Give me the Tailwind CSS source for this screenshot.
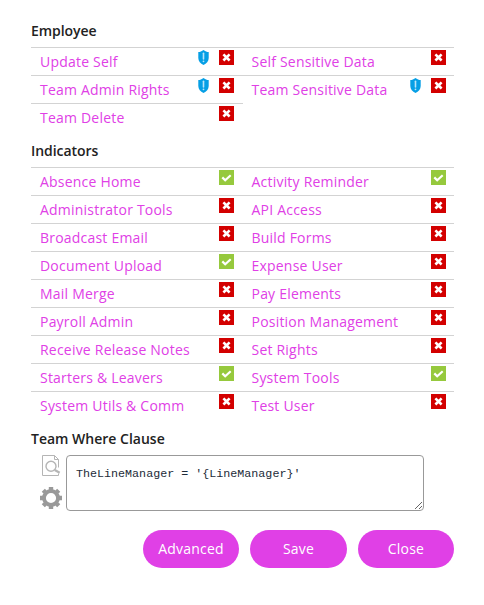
<!DOCTYPE html>
<html lang="en">
<head>
<meta charset="utf-8">
<title>Rights</title>
<script src="https://cdn.jsdelivr.net/npm/@tailwindcss/browser@4"></script>
</head>
<body class="bg-white font-['Open_Sans',sans-serif] text-[14px] text-[#222]">
<svg class="hidden">
  <symbol id="no" viewBox="0 0 15 15"><path fill="#d30000" d="M0 0h15v15H0z"/><path d="M4.400 4.300l6.200 6.200M10.600 4.300L4.400 10.500" stroke="#fff" stroke-width="2.600"/></symbol>
  <symbol id="yes" viewBox="0 0 15 15"><path fill="#96c93d" d="M0 0h15v15H0z"/><path d="M3.300 7.400l2.900 2.900 5.500-5" fill="none" stroke="#fff" stroke-width="2.200"/></symbol>
  <symbol id="shield" viewBox="0 0 11 15"><path fill="#069fe5" d="M5.500 0C7 1.300 9 2 10.700 2.100V8c0 3.200-2.200 5.600-5.200 7C2.500 13.600.3 11.200.3 8V2.100C2 2 4 1.300 5.500 0z"/><path d="M5.500 3.300v5.700" stroke="#b9e5fa" stroke-width="1.600" stroke-linecap="round"/><circle cx="5.500" cy="11.300" r=".9" fill="#b9e5fa"/></symbol>
</svg>
<main class="flex w-[454px] flex-col pl-[31px] pt-[20px]">
  <h2 class="h-[27px] font-semibold leading-[22px] tracking-[-0.05px]">Employee</h2>
  <section id="employee" class="grid grid-cols-[212px_211px]"></section>
  <h2 class="mt-[9px] h-[27px] font-semibold leading-[22px] tracking-[-0.05px]">Indicators</h2>
  <section id="indicators" class="grid grid-cols-[212px_211px]"></section>
  <h2 class="mt-[9px] h-[27px] font-semibold leading-[22px]">Team Where Clause</h2>
  <div class="flex pl-[9px]">
    <div class="flex w-[26px] flex-col gap-[10px]">
      <svg class="h-[22px] w-[22px]" viewBox="0 0 22 22" fill="none" stroke="#b5b5b5"><path d="M18.500 12.500V4.500L14.500.5H2.500v20h16v-2"/><path d="M14.500.5v4h4"/><circle cx="11" cy="11.300" r="5" stroke-width="1.400"/><path d="M14.700 15l5 2.800" stroke-width="2.200"/></svg>
      <svg class="h-[22px] w-[22px]" viewBox="0 0 22 22" fill="none" stroke="#999"><circle cx="11" cy="11" r="7" stroke-width="3.800"/><g stroke-width="4.400"><path d="M11 0v3M11 19v3M0 11h3M19 11h3M3.300 3.300l2 2M16.700 16.700l2 2M3.300 18.700l2-2M16.700 5.300l2-2"/></g></svg>
    </div>
    <textarea spellcheck="false" class="block h-[56px] w-[358px] resize rounded-[4px] border border-[#999] px-[9px] pt-[11px] font-['Liberation_Mono',monospace] text-[11.700px] leading-[15px] text-[#1c2b39]">TheLineManager = '{LineManager}'</textarea>
  </div>
  <div class="mt-[19px] flex gap-[11px] self-end text-white">
    <button class="h-[38px] w-[96px] rounded-full bg-[#e040e6] pb-[2px] tracking-[0.2px]">Advanced</button>
    <button class="h-[38px] w-[97px] rounded-full bg-[#e040e6] pb-[2px] tracking-[0.2px]">Save</button>
    <button class="h-[38px] w-[96px] rounded-full bg-[#e040e6] pb-[2px] tracking-[0.2px]">Close</button>
  </div>
</main>
<script>
const shield = '<svg class="mr-[10px] h-[15px] w-[11px]"><use href="#shield"/></svg>';
const mark = ok => `<svg class="h-[15px] w-[15px]"><use href="#${ok ? 'yes' : 'no'}"/></svg>`;
function fill(id, rows) {
  document.getElementById(id).innerHTML = rows.map(([name, ok, sh], i) =>
    `<div class="flex h-[28px] border-t border-[#d3d3d3] pt-[2px] ${i % 2 ? 'pl-[8.5px] pr-[8.5px]' : 'pl-[9px] pr-[9px]'}"><span class="flex-1 whitespace-nowrap pt-[2px] leading-[20px] tracking-[0.21px] text-[#e040e6]">${name}</span>${sh ? shield : ''}${mark(ok)}</div>`).join('');
}
fill('employee', [['Update Self',0,1],['Self Sensitive Data',0,0],['Team Admin Rights',0,1],['Team Sensitive Data',0,1],['Team Delete',0,0]]);
fill('indicators', [['Absence Home',1],['Activity Reminder',1],['Administrator Tools',0],['API Access',0],['Broadcast Email',0],['Build Forms',0],['Document Upload',1],['Expense User',0],['Mail Merge',0],['Pay Elements',0],['Payroll Admin',0],['Position Management',0],['Receive Release Notes',0],['Set Rights',0],['Starters &amp; Leavers',1],['System Tools',1],['System Utils &amp; Comm',0],['Test User',0]]);
</script>
</body>
</html>
